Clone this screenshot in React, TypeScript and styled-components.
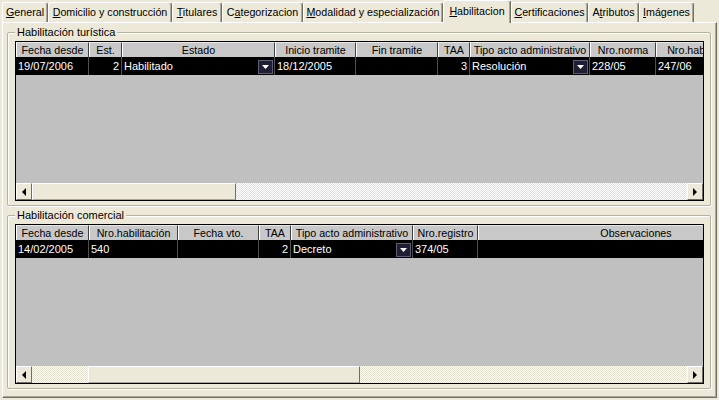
import React from 'react'
import styled, { createGlobalStyle } from 'styled-components'

const GlobalStyle = createGlobalStyle`
  html, body {
    margin: 0;
    padding: 0;
    background: #ECE9D8;
  }
`

const Window = styled.div`
  width: 719px;
  height: 400px;
  background: #ECE9D8;
  font-family: "Liberation Sans", Arial, sans-serif;
  font-size: 10.7px;
  color: #000;
  overflow: hidden;
`

const TabStrip = styled.div`
  display: flex;
  align-items: flex-end;
  height: 22px;
  padding-left: 2px;
`

const Tab = styled.div<{ $width: number; $active?: boolean }>`
  position: relative;
  z-index: ${({ $active }) => ($active ? 1 : 0)};
  box-sizing: border-box;
  width: ${({ $width }) => $width}px;
  height: ${({ $active }) => ($active ? 23 : 20)}px;
  margin-bottom: ${({ $active }) => ($active ? -1 : 0)}px;
  padding-top: ${({ $active }) => ($active ? 4 : 3)}px;
  background: #ECE9D8;
  border-top: 1px solid #fff;
  border-left: 1px solid #fff;
  border-right: 1px solid #716F64;
  border-radius: 3px 3px 0 0;
  box-shadow: inset -1px 0 #ACA899;
  text-align: center;
  line-height: 13px;
  white-space: nowrap;

  u {
    text-decoration: underline;
    text-underline-offset: 1px;
  }
`

const Panel = styled.div`
  box-sizing: border-box;
  width: 715px;
  height: 376px;
  margin-left: 2px;
  border-top: 1px solid #fff;
  border-left: 1px solid #fff;
  border-right: 1px solid #716F64;
  border-bottom: 1px solid #716F64;
  box-shadow: inset -1px -1px #ACA899;
  padding: 3px 5px 8px 4px;
  display: flex;
  flex-direction: column;
  gap: 3px;
`

const GroupBox = styled.fieldset`
  margin: 0;
  padding: 2px 6px 4px 7px;
  border: 1px solid #B5B2A3;
  border-radius: 2px;
  box-shadow: inset 1px 1px #fff, 1px 1px #fff;
  min-width: 0;
`

const GroupTitle = styled.legend`
  padding: 0 2px;
  line-height: 13px;
  font-size: 11px;
  background: #ECE9D8;
`

const Grid = styled.div`
  box-sizing: border-box;
  width: 689px;
  height: 160px;
  border: 1px solid #000;
  background: #C0C0C0;
  display: flex;
  flex-direction: column;
  overflow: hidden;
`

const HeaderRow = styled.div`
  display: flex;
  flex: none;
  height: 15px;
`

const HeaderCell = styled.div<{ $width: number }>`
  flex: none;
  box-sizing: border-box;
  width: ${({ $width }) => $width}px;
  height: 15px;
  background: #C8C8C8;
  border-left: 1px solid #fff;
  border-right: 1px solid #404040;
  border-top: 1px solid #E8E8E8;
  text-align: center;
  line-height: 14px;
  white-space: nowrap;
  overflow: hidden;
`

const DataRow = styled.div`
  display: flex;
  flex: none;
  height: 18px;
  background: #000;
`

const DataCell = styled.div<{ $width: number; $align?: 'left' | 'right' }>`
  flex: none;
  box-sizing: border-box;
  width: ${({ $width }) => $width}px;
  height: 18px;
  display: flex;
  align-items: center;
  justify-content: ${({ $align }) => ($align === 'right' ? 'flex-end' : 'space-between')};
  padding: 0 ${({ $align }) => ($align === 'right' ? 2 : 1)}px 0 2px;
  border-right: 1px solid #505050;
  color: #fff;
  font-size: 11px;
  white-space: nowrap;
  overflow: hidden;
`

const ComboButton = styled.div`
  flex: none;
  box-sizing: border-box;
  width: 15px;
  height: 14px;
  margin-top: 2px;
  background: #1E1E34;
  border: 1px solid #5C5C74;
  display: flex;
  align-items: center;
  justify-content: center;
`

const EmptyArea = styled.div`
  flex: 1;
`

const ScrollBar = styled.div`
  flex: none;
  display: flex;
  height: 17px;
`

const ScrollButton = styled.div`
  flex: none;
  box-sizing: border-box;
  width: 16px;
  height: 17px;
  background: #ECE9D8;
  border-top: 1px solid #fff;
  border-left: 1px solid #fff;
  border-right: 1px solid #716F64;
  border-bottom: 1px solid #716F64;
  display: flex;
  align-items: center;
  justify-content: center;
`

const Track = styled.div`
  flex: 1;
  display: flex;
  background: repeating-conic-gradient(#fff 0 25%, #E4E1D0 0 50%) 0 0 / 2px 2px;
`

const Thumb = styled.div`
  flex: none;
  box-sizing: border-box;
  height: 17px;
  background: #ECE9D8;
  border-top: 1px solid #fff;
  border-left: 1px solid #fff;
  border-right: 1px solid #716F64;
  border-bottom: 1px solid #ACA899;
`

type Column = { title: string; width: number }
type Cell = { text: string; align?: 'left' | 'right'; combo?: boolean }

const tabs = [
  { label: 'General', key: 0, width: 46 },
  { label: 'Domicilio y construcción', key: 0, width: 124 },
  { label: 'Titulares', key: 0, width: 50 },
  { label: 'Categorizacion', key: 1, width: 81 },
  { label: 'Modalidad y especialización', key: 0, width: 140 },
  { label: 'Habilitacion', key: 0, width: 68, active: true },
  { label: 'Certificaciones', key: 0, width: 77 },
  { label: 'Atributos', key: 1, width: 51 },
  { label: 'Imágenes', key: 0, width: 55 },
]

const turisticaCols: Column[] = [
  { title: 'Fecha desde', width: 73 },
  { title: 'Est.', width: 33 },
  { title: 'Estado', width: 153 },
  { title: 'Inicio tramite', width: 81 },
  { title: 'Fin tramite', width: 82 },
  { title: 'TAA', width: 32 },
  { title: 'Tipo acto administrativo', width: 120 },
  { title: 'Nro.norma', width: 66 },
  { title: 'Nro.habilitación', width: 96 },
]

const turisticaRow: Cell[] = [
  { text: '19/07/2006' },
  { text: '2', align: 'right' },
  { text: 'Habilitado', combo: true },
  { text: '18/12/2005' },
  { text: '' },
  { text: '3', align: 'right' },
  { text: 'Resolución', combo: true },
  { text: '228/05' },
  { text: '247/06' },
]

const comercialCols: Column[] = [
  { title: 'Fecha desde', width: 73 },
  { title: 'Nro.habilitación', width: 89 },
  { title: 'Fecha vto.', width: 81 },
  { title: 'TAA', width: 32 },
  { title: 'Tipo acto administrativo', width: 122 },
  { title: 'Nro.registro', width: 65 },
  { title: 'Observaciones', width: 316 },
]

const comercialRow: Cell[] = [
  { text: '14/02/2005' },
  { text: '540' },
  { text: '' },
  { text: '2', align: 'right' },
  { text: 'Decreto', combo: true },
  { text: '374/05' },
  { text: '' },
]

const Arrow = ({ dir, color = '#000' }: { dir: 'left' | 'right' | 'down'; color?: string }) => {
  const points = {
    left: '4,0 4,8 0,4',
    right: '0,0 0,8 4,4',
    down: '0,0 7,0 3.5,4',
  }[dir]
  const size = dir === 'down' ? { w: 7, h: 4 } : { w: 4, h: 8 }
  return (
    <svg width={size.w} height={size.h} viewBox={`0 0 ${size.w} ${size.h}`}>
      <polygon points={points} fill={color} />
    </svg>
  )
}

const TabLabel = ({ label, index }: { label: string; index: number }) => (
  <>
    {label.slice(0, index)}
    <u>{label[index]}</u>
    {label.slice(index + 1)}
  </>
)

const DataGrid = ({
  columns,
  row,
  thumbOffset,
  thumbWidth,
}: {
  columns: Column[]
  row: Cell[]
  thumbOffset: number
  thumbWidth: number
}) => (
  <Grid>
    <HeaderRow>
      {columns.map((c, i) => (
        <HeaderCell key={`h_${i}`} $width={c.width}>
          {c.title}
        </HeaderCell>
      ))}
    </HeaderRow>
    <DataRow>
      {row.map((cell, i) => (
        <DataCell key={`c_${i}`} $width={columns[i].width} $align={cell.align}>
          <span>{cell.text}</span>
          {cell.combo && (
            <ComboButton>
              <Arrow dir="down" color="#fff" />
            </ComboButton>
          )}
        </DataCell>
      ))}
    </DataRow>
    <EmptyArea />
    <ScrollBar>
      <ScrollButton>
        <Arrow dir="left" />
      </ScrollButton>
      <Track>
        <Thumb style={{ marginLeft: thumbOffset, width: thumbWidth }} />
      </Track>
      <ScrollButton>
        <Arrow dir="right" />
      </ScrollButton>
    </ScrollBar>
  </Grid>
)

export default function App() {
  return (
    <Window>
      <GlobalStyle />
      <TabStrip>
        {tabs.map((t, i) => (
          <Tab key={`tab_${i}`} $width={t.width} $active={t.active}>
            <TabLabel label={t.label} index={t.key} />
          </Tab>
        ))}
      </TabStrip>
      <Panel>
        <GroupBox>
          <GroupTitle>Habilitación turística</GroupTitle>
          <DataGrid columns={turisticaCols} row={turisticaRow} thumbOffset={0} thumbWidth={204} />
        </GroupBox>
        <GroupBox>
          <GroupTitle>Habilitación comercial</GroupTitle>
          <DataGrid columns={comercialCols} row={comercialRow} thumbOffset={56} thumbWidth={272} />
        </GroupBox>
      </Panel>
    </Window>
  )
}
